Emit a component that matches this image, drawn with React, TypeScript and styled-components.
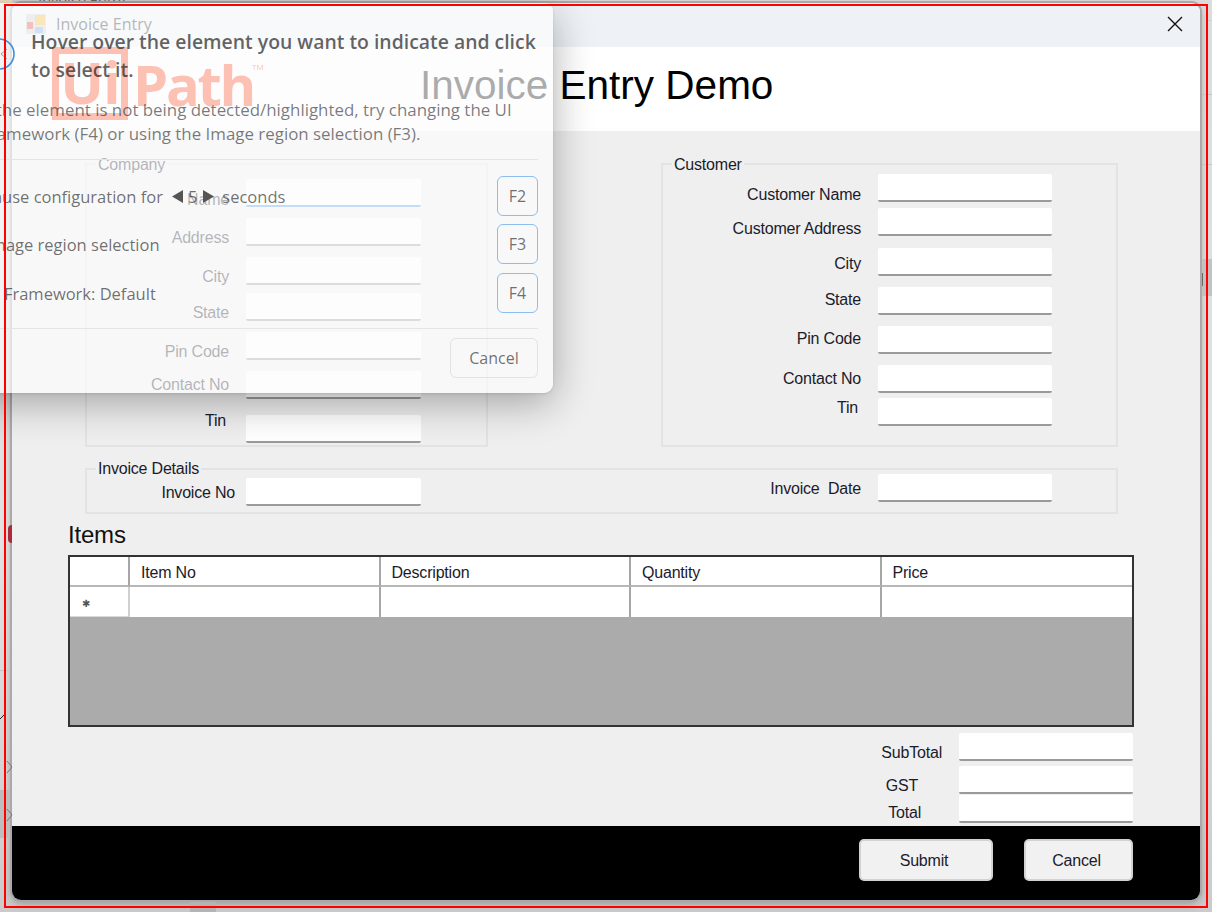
import React from "react";
import styled, { createGlobalStyle } from "styled-components";

const Global = createGlobalStyle`
  html, body { margin: 0; padding: 0; background: #d4d4d4; }
  * { box-sizing: border-box; }
`;

const FORM_FONT = `"Liberation Sans", Arial, sans-serif`;
const UI_FONT = `"Open Sans", "Noto Sans", sans-serif`;

const Screen = styled.div`
  position: relative;
  width: 1212px;
  height: 912px;
  overflow: hidden;
  background: linear-gradient(180deg, #dcdcdc 0%, #e2e2e2 60%, #cbcbcb 100%);
  padding: 3px 0 0 12px;
  font-family: ${FORM_FONT};
  letter-spacing: -0.2px;
  color: #111;
`;

const Backdrop = styled.div<{ $x: number; $y: number; $w: number; $h: number; $c: string }>`
  position: absolute;
  left: ${(p) => p.$x}px;
  top: ${(p) => p.$y}px;
  width: ${(p) => p.$w}px;
  height: ${(p) => p.$h}px;
  background: ${(p) => p.$c};
`;

const RedDot = styled.div`
  position: absolute;
  z-index: 1;
  left: 8px;
  top: 525px;
  width: 4px;
  height: 18px;
  border-radius: 4px 0 0 4px;
  background: #a92a3a;
`;

const BackIcon = styled.svg<{ $x: number; $y: number }>`
  position: absolute;
  z-index: 1;
  left: ${(p) => p.$x}px;
  top: ${(p) => p.$y}px;
`;

const BackTitle = styled.div`
  position: absolute;
  left: 38px;
  top: -10px;
  font: 15px ${UI_FONT};
  color: #666;
`;

const Window = styled.div`
  position: relative;
  width: 1188px;
  height: 897px;
  border-radius: 9px;
  overflow: hidden;
  display: flex;
  flex-direction: column;
  box-shadow: 0 0 0 2px #a9a9a9;
  background: #efefef;
`;

const WindowShadow = styled.div`
  border-radius: 9px;
  width: 1188px;
  box-shadow: 0 3px 10px rgba(0, 0, 0, 0.3);
`;

const TitleBar = styled.div`
  height: 44px;
  flex: none;
  background: #eef2f6;
  display: flex;
  align-items: center;
  padding: 0 17px 2px 14px;
`;

const TitleText = styled.span`
  margin-left: 10px;
  font: 16px ${UI_FONT};
  letter-spacing: 0;
  color: #222;
  flex: 1;
`;

const Header = styled.header`
  height: 84px;
  flex: none;
  background: #fff;
  display: flex;
  align-items: flex-start;
  padding-left: 40px;
`;

const LogoFrame = styled.div`
  width: 76px;
  height: 73px;
  border: 7px solid #fa4616;
  color: #fa4616;
  font: 700 58px/56px ${UI_FONT};
  text-align: center;
  letter-spacing: -1px;
  flex: none;
`;

const LogoPath = styled.div`
  margin: 4px 0 0 5px;
  color: #fa4616;
  font: 700 56px/66px ${UI_FONT};
  width: 119px;
  flex: none;
  letter-spacing: -2.25px;
`;

const LogoTm = styled.sup`
  font: 8px/10px ${UI_FONT};
  letter-spacing: 0;
  color: #fa4616;
  margin: 15px 0 0 0;
  width: 168px;
  flex: none;
`;

const PageTitle = styled.h1`
  margin: 13px 0 0 0;
  font: 400 40.5px/50px ${FORM_FONT};
  letter-spacing: 0;
  color: #000;
  white-space: nowrap;
`;

const Body = styled.main`
  flex: 1;
  display: flex;
  flex-direction: column;
  padding: 32px 67px 0 56px;
`;

const TopGroups = styled.div`
  display: flex;
  gap: 173px;
  padding-left: 17px;
`;

const Group = styled.section<{ $w: number; $h: number; $pad: number }>`
  position: relative;
  width: ${(p) => p.$w}px;
  height: ${(p) => p.$h}px;
  flex: none;
  padding-top: ${(p) => p.$pad}px;
  border: 2px solid #e3e3e3;
`;

const Legend = styled.span<{ $top?: number }>`
  position: absolute;
  top: ${(p) => p.$top ?? -9}px;
  left: 9px;
  padding: 0 2px;
  font-size: 16px;
  line-height: 18px;
  background: #efefef;
  color: #1b1b2b;
`;

const Row = styled.div<{ $gap?: number }>`
  display: flex;
  align-items: flex-start;
  height: 28px;
  margin-top: ${(p) => p.$gap ?? 0}px;
`;

const Label = styled.label<{ $w: number; $drop: number; $inset?: number; $space?: number }>`
  width: ${(p) => p.$w}px;
  flex: none;
  margin: ${(p) => p.$drop}px ${(p) => p.$space ?? 17}px 0 0;
  padding-right: ${(p) => p.$inset ?? 0}px;
  text-align: right;
  font-size: 16px;
  line-height: 22px;
  color: #1b1b2b;
  white-space: pre;
`;

const Field = styled.div<{ $w?: number; $focus?: boolean }>`
  width: ${(p) => p.$w ?? 174}px;
  height: 28px;
  flex: none;
  background: #fff;
  border-radius: 2px;
  border-bottom: 2px solid ${(p) => (p.$focus ? "#4a9be8" : "#9a9a9a")};
`;

const DetailsGroup = styled.section`
  position: relative;
  width: 1033px;
  height: 46px;
  margin: 21px 0 0 17px;
  flex: none;
  border: 2px solid #e3e3e3;
  display: flex;
  padding-top: 4px;
`;

const DetailsInvoiceNo = styled.div`
  margin-top: 4px;
`;

const DetailsInvoiceDate = styled.div`
  margin-left: 290px;
`;

const ItemsTitle = styled.h2`
  margin: 6px 0 0 0;
  font: 400 24px/30px ${FORM_FONT};
  color: #111;
`;

const Table = styled.div`
  width: 1066px;
  height: 172px;
  margin-top: 5px;
  flex: none;
  border: 2px solid #333;
  background: #ababab;
`;

const TableRow = styled.div<{ $h: number }>`
  display: grid;
  grid-template-columns: 60px repeat(4, 250.5px);
  height: ${(p) => p.$h}px;
`;

const HeadCell = styled.div`
  background: #fff;
  border-right: 2px solid #a6a6a6;
  border-bottom: 2px solid #b8b8b8;
  padding: 7px 0 0 11px;
  font-size: 16px;
  line-height: 18px;
  color: #1b1b2b;
  &:last-child { border-right: 0; }
`;

const RowHead = styled.div`
  background: #fff;
  height: 30px;
  border-right: 2px solid #d0d0d0;
  border-bottom: 1px solid #d8d8d8;
  padding: 10px 0 0 12px;
  font: 10px/14px "DejaVu Sans", sans-serif;
  color: #555;
`;

const DataCell = styled.div`
  background: #fff;
  border-right: 2px solid #a6a6a6;
  &:last-child { border-right: 0; }
`;

const Totals = styled.div`
  display: flex;
  flex-direction: column;
  align-items: flex-end;
  margin-top: 6px;
`;

const TotalRow = styled.div<{ $gap?: number }>`
  display: flex;
  align-items: flex-start;
  height: 28px;
  margin-top: ${(p) => p.$gap ?? 0}px;
`;

const TotalLabel = styled.span<{ $inset: number; $drop: number }>`
  margin: ${(p) => p.$drop}px ${(p) => 17 + p.$inset}px 0 0;
  font-size: 16px;
  line-height: 20px;
  color: #1b1b2b;
`;

const Footer = styled.footer`
  height: 74px;
  flex: none;
  background: #000;
  display: flex;
  justify-content: flex-end;
  padding: 13px 67px 0 0;
  gap: 31px;
`;

const FormButton = styled.button<{ $w: number }>`
  width: ${(p) => p.$w}px;
  height: 42px;
  background: #f1f1f1;
  border: 2px solid #d2d2d2;
  border-radius: 5px;
  font: 16px ${FORM_FONT};
  letter-spacing: -0.2px;
  color: #1b1b2b;
  padding: 2px 4px 0 0;
`;

const Dialog = styled.div`
  position: absolute;
  z-index: 2;
  left: -30px;
  top: 3px;
  width: 583px;
  height: 390px;
  border-radius: 0 8px 9px 9px;
  background: rgba(252, 252, 253, 0.68);
  box-shadow: 0 10px 40px rgba(0, 0, 0, 0.32), 0 1px 3px rgba(0, 0, 0, 0.1);
  padding: 25px 15px 0 13px;
  font-family: ${UI_FONT};
  letter-spacing: 0;
`;

const HintIcon = styled.svg`
  position: absolute;
  left: 13px;
  top: 35px;
`;

const DialogHeading = styled.div`
  padding-left: 48px;
  font-size: 19.4px;
  font-weight: 600;
  line-height: 28px;
  color: rgba(20, 20, 20, 0.68);
  white-space: nowrap;
`;

const DialogBody = styled.p`
  margin: 14px 0 0 -2px;
  font-size: 16.9px;
  line-height: 24px;
  color: rgba(30, 30, 30, 0.6);
  white-space: nowrap;
`;

const Divider = styled.hr<{ $top: number }>`
  border: 0;
  height: 1px;
  margin: ${(p) => p.$top}px 0 0 0;
  background: #e4e4e4;
`;

const OptionList = styled.div`
  display: flex;
  flex-direction: column;
  margin-top: 16px;
`;

const OptionRow = styled.div<{ $gap: number }>`
  display: flex;
  align-items: center;
  height: 40px;
  margin-top: ${(p) => p.$gap}px;
  font-size: 16.5px;
  color: rgba(30, 30, 30, 0.65);
`;

const OptionText = styled.span<{ $indent?: number }>`
  flex: 1;
  display: flex;
  align-items: center;
  padding: 1px 0 0 ${(p) => p.$indent ?? 0}px;
  white-space: pre;
`;

const Spin = styled.svg<{ $l: number; $r: number }>`
  margin: 0 ${(p) => p.$r}px 0 ${(p) => p.$l}px;
  flex: none;
`;

const KeyButton = styled.div`
  width: 41px;
  height: 40px;
  flex: none;
  border: 1.5px solid #8dbdee;
  border-radius: 6px;
  display: flex;
  align-items: center;
  justify-content: center;
  font-size: 16px;
  color: rgba(30, 30, 30, 0.65);
`;

const DialogActions = styled.div`
  display: flex;
  justify-content: flex-end;
  margin-top: 9px;
`;

const CancelGhost = styled.div`
  width: 88px;
  height: 40px;
  border: 1.5px solid #e2e2e2;
  border-radius: 6px;
  display: flex;
  align-items: center;
  justify-content: center;
  font-size: 16px;
  color: rgba(30, 30, 30, 0.65);
`;

const RedFrame = styled.div`
  position: absolute;
  z-index: 3;
  left: 4px;
  top: 4px;
  width: 1204px;
  height: 904px;
  border: 2px solid #ff0000;
`;

const Chevron = ({ x, y }: { x: number; y: number }) => (
  <BackIcon $x={x} $y={y} width="8" height="14" viewBox="0 0 8 14">
    <path d="M1 1l5 6-5 6" fill="none" stroke="#777" strokeWidth="1" />
  </BackIcon>
);

const CompanyRows: [string, number, number, number?][] = [
  ["Name", 0, 10],
  ["Address", 11, 9],
  ["City", 11, 9],
  ["State", 8, 9],
  ["Pin Code", 11, 9],
  ["Contact No", 11, 3],
  ["Tin", 16, -5, 3],
];

const CustomerRows: [string, number, number, number?][] = [
  ["Customer Name", 0, 10],
  ["Customer Address", 6, 10],
  ["City", 12, 5],
  ["State", 11, 2],
  ["Pin Code", 11, 2],
  ["Contact No", 11, 3],
  ["Tin", 5, -1, 3],
];

export default function App() {
  return (
    <Screen>
      <Global />
      <BackTitle>Invoice Entry</BackTitle>
      <Backdrop $x={0} $y={0} $w={12} $h={3} $c="#f3e4c4" />
      <Backdrop $x={0} $y={670} $w={11} $h={1} $c="#c4c4c4" />
      <Backdrop $x={0} $y={790} $w={11} $h={48} $c="#bdbdbd" />
      <Backdrop $x={1201} $y={20} $w={11} $h={1} $c="#cfcfcf" />
      <Backdrop $x={1201} $y={94} $w={11} $h={1} $c="#c4c4c4" />
      <Backdrop $x={1201} $y={164} $w={11} $h={1} $c="#c4c4c4" />
      <Backdrop $x={1201} $y={259} $w={11} $h={37} $c="#c2c2c2" />
      <Backdrop $x={1202} $y={273} $w={1} $h={13} $c="#6a6a6a" />
      <Backdrop $x={190} $y={901} $w={26} $h={11} $c="#b4b4b4" />
      <RedDot />
      <BackIcon $x={0} $y={714} width="5" height="6" viewBox="0 0 5 6">
        <path d="M0 5l4-4" stroke="#222" strokeWidth="1" />
      </BackIcon>
      <Chevron x={6} y={760} />
      <Chevron x={6} y={808} />
      <WindowShadow>
        <Window>
          <TitleBar>
            <svg width="20" height="20" viewBox="0 0 20 20">
              <rect x="0" y="0" width="20" height="20" fill="#cfcfcf" />
              <rect x="9" y="1" width="10" height="10" fill="#f2b82e" />
              <rect x="1" y="8" width="6" height="7" fill="#d9433f" />
              <rect x="9" y="13" width="8" height="6" fill="#7aa6e8" />
            </svg>
            <TitleText>Invoice Entry</TitleText>
            <svg width="16" height="16" viewBox="0 0 16 16">
              <path d="M1 1l14 14M15 1L1 15" stroke="#111" strokeWidth="1.4" />
            </svg>
          </TitleBar>
          <Header>
            <LogoFrame>Ui</LogoFrame>
            <LogoPath>Path</LogoPath>
            <LogoTm>TM</LogoTm>
            <PageTitle>Invoice Entry Demo</PageTitle>
          </Header>
          <Body>
            <TopGroups>
              <Group $w={403} $h={284} $pad={14}>
                <Legend>Company</Legend>
                {CompanyRows.map(([t, gap, drop, inset], i) => (
                  <Row key={t} $gap={gap}>
                    <Label $w={142} $drop={drop} $inset={inset}>{t}</Label>
                    <Field $w={175} $focus={i === 0} />
                  </Row>
                ))}
              </Group>
              <Group $w={457} $h={284} $pad={9}>
                <Legend>Customer</Legend>
                {CustomerRows.map(([t, gap, drop, inset]) => (
                  <Row key={t} $gap={gap}>
                    <Label $w={198} $drop={drop} $inset={inset}>{t}</Label>
                    <Field />
                  </Row>
                ))}
              </Group>
            </TopGroups>
            <DetailsGroup>
              <Legend $top={-10}>Invoice Details</Legend>
              <DetailsInvoiceNo>
                <Row>
                  <Label $w={148} $drop={4} $space={11}>Invoice No</Label>
                  <Field $w={175} />
                </Row>
              </DetailsInvoiceNo>
              <DetailsInvoiceDate>
                <Row>
                  <Label $w={150} $drop={4}>Invoice  Date</Label>
                  <Field />
                </Row>
              </DetailsInvoiceDate>
            </DetailsGroup>
            <ItemsTitle>Items</ItemsTitle>
            <Table>
              <TableRow $h={30}>
                <HeadCell />
                <HeadCell>Item No</HeadCell>
                <HeadCell>Description</HeadCell>
                <HeadCell>Quantity</HeadCell>
                <HeadCell>Price</HeadCell>
              </TableRow>
              <TableRow $h={29}>
                <RowHead>✱</RowHead>
                <DataCell />
                <DataCell />
                <DataCell />
                <DataCell />
              </TableRow>
            </Table>
            <Totals>
              <TotalRow>
                <TotalLabel $inset={0} $drop={10}>SubTotal</TotalLabel>
                <Field />
              </TotalRow>
              <TotalRow $gap={5}>
                <TotalLabel $inset={24} $drop={10}>GST</TotalLabel>
                <Field />
              </TotalRow>
              <TotalRow $gap={1}>
                <TotalLabel $inset={21} $drop={8}>Total</TotalLabel>
                <Field />
              </TotalRow>
            </Totals>
          </Body>
          <Footer>
            <FormButton $w={134}>Submit</FormButton>
            <FormButton $w={109}>Cancel</FormButton>
          </Footer>
        </Window>
      </WindowShadow>
      <Dialog>
        <HintIcon width="32" height="32" viewBox="0 0 32 32">
          <circle cx="16" cy="16" r="15" fill="none" stroke="#3f8fe0" strokeWidth="1.6" />
          <path d="M24 11l-6 5 6 5" fill="none" stroke="#999" strokeWidth="1" />
        </HintIcon>
        <DialogHeading>
          Hover over the element you want to indicate and click
          <br />
          to select it.
        </DialogHeading>
        <DialogBody>
          If the element is not being detected/highlighted, try changing the UI
          <br />
          Framework (F4) or using the Image region selection (F3).
        </DialogBody>
        <Divider $top={13} />
        <OptionList>
          <OptionRow $gap={0}>
            <OptionText>
              Pause configuration for
              <Spin $l={9} $r={5} width="11" height="13" viewBox="0 0 11 13">
                <path d="M11 0v13L0 6.5z" fill="#555" />
              </Spin>
              5
              <Spin $l={5} $r={7} width="13" height="13" viewBox="0 0 13 13">
                <path d="M1 0v13l11-6.5z" fill="#555" />
              </Spin>
              seconds
            </OptionText>
            <KeyButton>F2</KeyButton>
          </OptionRow>
          <OptionRow $gap={8}>
            <OptionText $indent={3}>Image region selection</OptionText>
            <KeyButton>F3</KeyButton>
          </OptionRow>
          <OptionRow $gap={9}>
            <OptionText>UI Framework: Default</OptionText>
            <KeyButton>F4</KeyButton>
          </OptionRow>
        </OptionList>
        <Divider $top={15} />
        <DialogActions>
          <CancelGhost>Cancel</CancelGhost>
        </DialogActions>
      </Dialog>
      <RedFrame />
    </Screen>
  );
}
